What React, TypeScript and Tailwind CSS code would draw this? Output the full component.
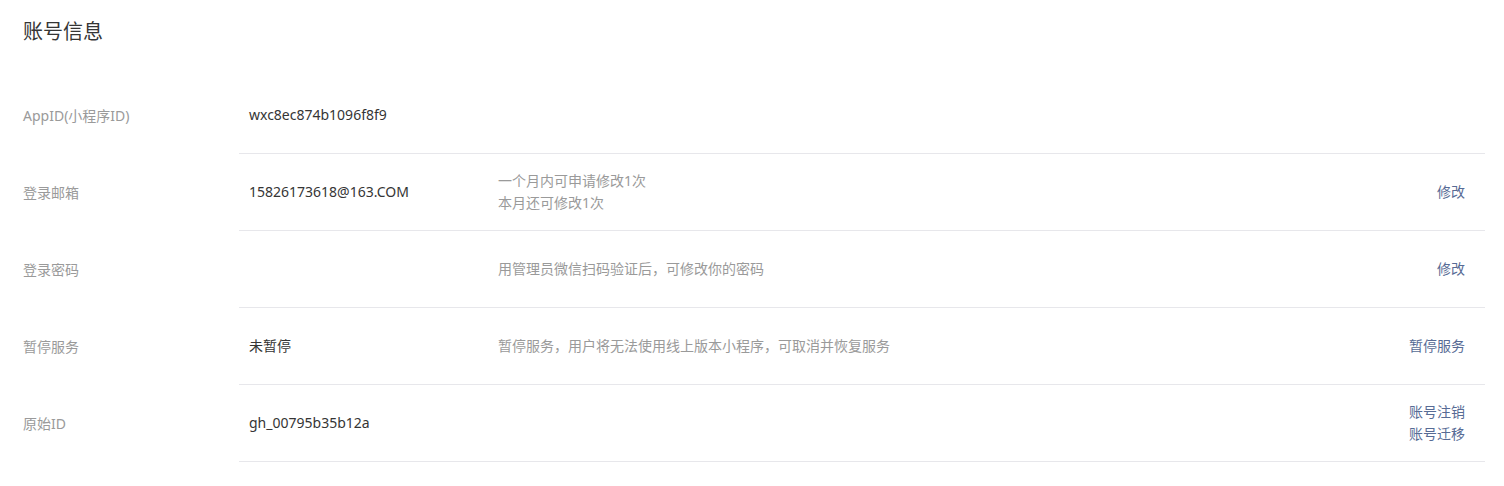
import React from 'react'

type Row = {
  label: string
  value?: string
  valueClass?: string
  tips?: string[]
  actions?: string[]
}

const rows: Row[] = [
  { label: 'AppID(小程序ID)', value: 'wxc8ec874b1096f8f9' },
  {
    label: '登录邮箱',
    value: '15826173618@163.COM',
    tips: ['一个月内可申请修改1次', '本月还可修改1次'],
    actions: ['修改'],
  },
  {
    label: '登录密码',
    tips: ['用管理员微信扫码验证后，可修改你的密码'],
    actions: ['修改'],
  },
  {
    label: '暂停服务',
    value: '未暂停',
    tips: ['暂停服务，用户将无法使用线上版本小程序，可取消并恢复服务'],
    actions: ['暂停服务'],
  },
  { label: '原始ID', value: 'gh_00795b35b12a', actions: ['账号注销', '账号迁移'] },
]

export default function App() {
  return (
    <div
      className="min-h-screen bg-white pl-[23px] pr-[19px] text-[14px] leading-[22px]"
      style={{ fontFamily: '"Noto Sans", "Noto Sans CJK SC", sans-serif' }}
    >
      <h2 className="pt-5 pb-[33px] text-[20px] leading-6 font-normal text-[#353535]">账号信息</h2>

      <div>
        {rows.map((row) => (
          <div key={row.label} className="flex h-[77px]">
            <div className="flex w-[216px] shrink-0 items-center text-[#9a9a9a]">{row.label}</div>
            <div className="flex flex-1 items-center border-b border-[#e7e7eb] pl-[10px] pr-5">
              <div className="w-[249px] shrink-0 text-[#353535]">{row.value}</div>
              <div className="flex-1 text-[#9a9a9a]">
                {row.tips?.map((t) => (
                  <div key={t}>{t}</div>
                ))}
              </div>
              <div className="flex flex-col items-end text-[#576b95]">
                {row.actions?.map((a) => (
                  <a key={a} href="#" className="hover:underline">
                    {a}
                  </a>
                ))}
              </div>
            </div>
          </div>
        ))}
      </div>
    </div>
  )
}
